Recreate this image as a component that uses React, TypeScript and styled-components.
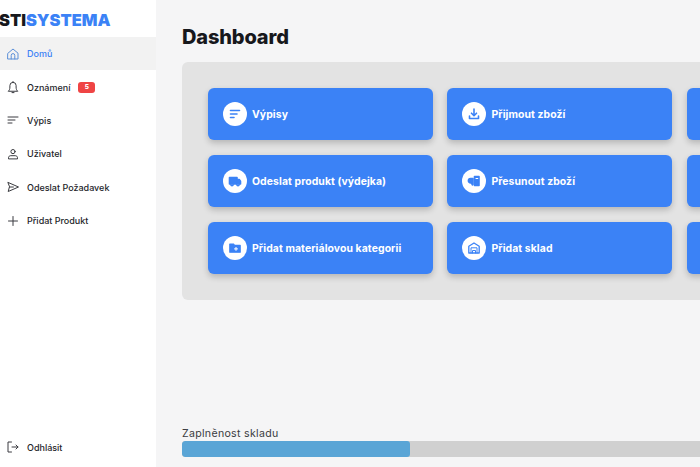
import { FC, ReactNode } from 'react'
import styled, { createGlobalStyle } from 'styled-components'

const FONT = '"Inter", "Noto Sans", sans-serif'

const GlobalStyle = createGlobalStyle`
  html, body {
    margin: 0;
    padding: 0;
    height: 100%;
    overflow: hidden;
    background: #f5f5f6;
    font-family: ${FONT};
  }
  #root {
    height: 100%;
  }
`

const Shell = styled.div`
  display: flex;
  width: 700px;
  height: 467px;
  overflow: hidden;
`

const Sidebar = styled.aside`
  flex: 0 0 156px;
  display: flex;
  flex-direction: column;
  background: #ffffff;
  overflow: hidden;
`

const Logo = styled.div`
  height: 37px;
  margin-left: -1px;
  padding-top: 11px;
  box-sizing: border-box;
  font-size: 16.4px;
  line-height: 18px;
  font-weight: 900;
  color: #17181c;
  white-space: nowrap;
  span {
    color: #3b82f6;
  }
`

const NavList = styled.nav`
  display: flex;
  flex-direction: column;
  flex: 1;
`

const NavRow = styled.a<{ $active?: boolean; $bottom?: boolean }>`
  display: flex;
  align-items: center;
  height: 33.4px;
  padding-left: 6px;
  background: ${(p) => (p.$active ? '#f2f2f2' : 'transparent')};
  color: ${(p) => (p.$active ? '#3b82f6' : '#24252a')};
  font-size: 9px;
  font-weight: 500;
  margin-top: ${(p) => (p.$bottom ? 'auto' : '0')};
  margin-bottom: ${(p) => (p.$bottom ? '3px' : '0')};
`

const NavIcon = styled.svg<{ $active?: boolean }>`
  width: 14px;
  height: 14px;
  margin-right: 7px;
  flex: none;
  fill: none;
  stroke: ${(p) => (p.$active ? '#5b8fd8' : '#3a3b40')};
  stroke-width: 1;
  stroke-linecap: round;
  stroke-linejoin: round;
`

const Badge = styled.span`
  margin-left: 8px;
  width: 17px;
  height: 11px;
  border-radius: 3px;
  background: #ef4444;
  color: #ffffff;
  font-size: 6.5px;
  font-weight: 800;
  line-height: 11px;
  text-align: center;
`

const Main = styled.main`
  flex: 1;
  min-width: 0;
  display: flex;
  flex-direction: column;
  padding: 24px 0 10px 26px;
  overflow: hidden;
`

const Title = styled.h1`
  margin: 0 0 12px;
  font-size: 20px;
  line-height: 26px;
  font-weight: 800;
  letter-spacing: -0.15px;
  color: #17181c;
`

const Panel = styled.section`
  width: 620px;
  height: 238px;
  box-sizing: border-box;
  padding: 26px;
  background: #e3e3e3;
  border-radius: 6px;
`

const CardGrid = styled.div`
  display: grid;
  grid-template-columns: repeat(3, 225px);
  grid-auto-rows: 52px;
  gap: 15px 14.4px;
`

const Card = styled.a`
  display: flex;
  align-items: center;
  gap: 5px;
  padding-left: 15px;
  background: #3b82f6;
  border-radius: 6px;
  box-shadow: 0 3px 6px rgba(0, 0, 0, 0.2);
  color: #ffffff;
  font-size: 10.4px;
  font-weight: 700;
  letter-spacing: 0.1px;
`

const IconCircle = styled.span`
  flex: none;
  display: flex;
  align-items: center;
  justify-content: center;
  width: 24px;
  height: 24px;
  border-radius: 50%;
  background: #ffffff;
`

const CardIcon = styled.svg`
  width: 14px;
  height: 14px;
  fill: none;
  stroke: #3b82f6;
  stroke-width: 1.6;
  stroke-linecap: round;
  stroke-linejoin: round;
`

const Capacity = styled.div`
  margin-top: auto;
  width: 620px;
`

const CapacityLabel = styled.div`
  margin-bottom: 1px;
  font-size: 10.6px;
  line-height: 13px;
  color: #3a3b40;
  letter-spacing: 0.3px;
`

const Track = styled.div`
  height: 16px;
  border-radius: 3px;
  background: #d0d0d0;
  overflow: hidden;
`

const Fill = styled.div`
  height: 100%;
  border-radius: 3px;
  background: #5aa5d6;
`

const nav: { label: string; icon: ReactNode; badge?: string; active?: boolean }[] = [
  {
    label: 'Domů',
    active: true,
    icon: (
      <>
        <path d="M2 6.2 7 2l5 4.2V12H2z" />
        <path d="M5.2 12V8.4a1.8 1.8 0 0 1 3.6 0V12" />
      </>
    ),
  },
  {
    label: 'Oznámení',
    badge: '5',
    icon: (
      <>
        <path d="M2.5 11c1-.9 1.4-2 1.4-4V5.5a3.1 3.1 0 0 1 6.2 0V7c0 2 .4 3.1 1.4 4z" />
        <path d="M6 12.6h2M7 2.2V1.5" />
      </>
    ),
  },
  { label: 'Výpis', icon: <path d="M2 4h10M2 7h7M2 10h4" /> },
  {
    label: 'Uživatel',
    icon: (
      <>
        <circle cx="7" cy="4.6" r="2.1" />
        <path d="M2.5 11.5v-.8c0-1.2 1-2 2.2-2h4.6c1.2 0 2.2.8 2.2 2v.8z" />
      </>
    ),
  },
  { label: 'Odeslat Požadavek', icon: <path d="M2.2 2.5 12.5 7 2.2 11.5 3.4 7zM3.4 7h4" /> },
  { label: 'Přidat Produkt', icon: <path d="M7 2.5v9M2.5 7h9" /> },
]

const cards: { label: string; icon: ReactNode }[] = [
  { label: 'Výpisy', icon: <path d="M2.5 3.5h9M2.5 7h6.5M2.5 10.5h3.5" /> },
  {
    label: 'Přijmout zboží',
    icon: <path d="M7 2v6.5M4.5 6.2 7 8.7l2.5-2.5M2.5 9v2.5h9V9" />,
  },
  { label: '', icon: null },
  {
    label: 'Odeslat produkt (výdejka)',
    icon: (
      <>
        <path d="M1.5 3.5h7.5v6.5H1.5z" fill="#3b82f6" />
        <path d="M9 5.5h2.2l1.3 1.8V10H9z" fill="#3b82f6" />
        <circle cx="4" cy="10.5" r="1.1" fill="#ffffff" />
        <circle cx="10" cy="10.5" r="1.1" fill="#ffffff" />
      </>
    ),
  },
  {
    label: 'Přesunout zboží',
    icon: (
      <>
        <path d="M7.5 2.5h4.5v9H7.5z" fill="#3b82f6" />
        <path d="M9 4.5h1.8" stroke="#ffffff" strokeWidth="1" />
        <path d="M5.8 4.5H3.6a1.8 1.8 0 0 0 0 4.4h.8l1 2.1.6-.5V4.5z" fill="#3b82f6" />
      </>
    ),
  },
  { label: '', icon: null },
  {
    label: 'Přidat materiálovou kategorii',
    icon: (
      <>
        <path d="M1.8 3h3.6l1.2 1.4h5.6v6.8H1.8z" strokeWidth="1.2" fill="#3b82f6" />
        <path d="M8 6.4v3M6.5 7.9h3" strokeWidth="1" stroke="#ffffff" />
      </>
    ),
  },
  {
    label: 'Přidat sklad',
    icon: (
      <>
        <path d="M1.8 12V5.2L7 2l5.2 3.2V12z" strokeWidth="1.3" />
        <path d="M4 12V6.8h6V12M5.5 12V9.5h3V12" strokeWidth="1" />
      </>
    ),
  },
  { label: '', icon: null },
]

const App: FC = () => {
  const fillPercent = (228 / 620) * 100

  return (
    <>
      <GlobalStyle />
      <Shell>
        <Sidebar>
          <Logo>
            STI<span>SYSTEMA</span>
          </Logo>
          <NavList>
            {nav.map((item) => (
              <NavRow key={item.label} $active={item.active}>
                <NavIcon viewBox="0 0 14 14" $active={item.active}>
                  {item.icon}
                </NavIcon>
                {item.label}
                {item.badge && <Badge>{item.badge}</Badge>}
              </NavRow>
            ))}
            <NavRow $bottom>
              <NavIcon viewBox="0 0 14 14">
                <path d="M5.5 2H2v10h3.5M6 7h6M10 5l2 2-2 2" />
              </NavIcon>
              Odhlásit
            </NavRow>
          </NavList>
        </Sidebar>
        <Main>
          <Title>Dashboard</Title>
          <Panel>
            <CardGrid>
              {cards.map((card, i) => (
                <Card key={i}>
                  {card.icon && (
                    <IconCircle>
                      <CardIcon viewBox="0 0 14 14">{card.icon}</CardIcon>
                    </IconCircle>
                  )}
                  {card.label}
                </Card>
              ))}
            </CardGrid>
          </Panel>
          <Capacity>
            <CapacityLabel>Zaplněnost skladu</CapacityLabel>
            <Track>
              <Fill style={{ width: `${fillPercent}%` }} />
            </Track>
          </Capacity>
        </Main>
      </Shell>
    </>
  )
}

export default App
